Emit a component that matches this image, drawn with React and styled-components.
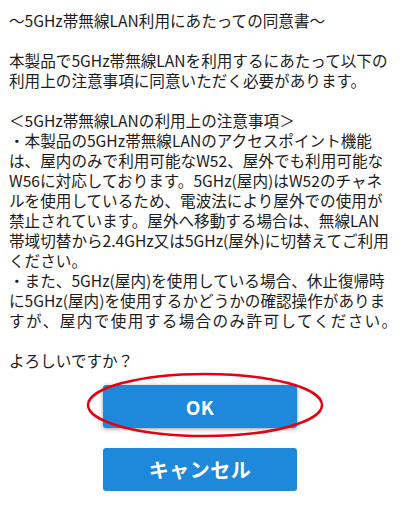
import React from 'react';
import styled, { createGlobalStyle } from 'styled-components';

const GlobalStyle = createGlobalStyle`
    html, body {
        margin: 0;
        padding: 0;
        background: #ffffff;
    }
    body {
        font-family: "Noto Sans CJK JP", "Noto Sans", sans-serif;
    }
`;

const Page = styled.div`
    width: 400px;
    height: 514px;
    box-sizing: border-box;
    padding: 10px 0 0 9px;
    display: flex;
    flex-direction: column;
    overflow: hidden;
`;

const Message = styled.div`
    font-size: 15.6px;
    line-height: 20px;
    color: #1c1c1c;
    white-space: nowrap;
`;

const Line = styled.div`
    height: 20px;
    letter-spacing: ${p => (p.$spread ? '1.4px' : 'normal')};
`;

const Actions = styled.div`
    margin-top: 15px;
    padding-right: 9px;
    display: flex;
    flex-direction: column;
    align-items: center;
    gap: 20px;
`;

const Focus = styled.div`
    position: relative;
`;

const Button = styled.button`
    width: 194px;
    height: 43px;
    border: none;
    border-radius: 3px;
    background: #1e88da;
    color: #ffffff;
    font-family: "Noto Sans CJK JP", "Noto Sans", sans-serif;
    font-weight: 700;
    font-size: ${p => (p.$small ? '19px' : '20px')};
    letter-spacing: 0.5px;
    box-shadow: ${p => (p.$raised ? '0 1px 4px rgba(0, 0, 0, 0.4)' : 'none')};
    display: flex;
    align-items: center;
    justify-content: center;
    padding: 0;
`;

const Circle = styled.svg`
    position: absolute;
    left: -17px;
    top: -13px;
    pointer-events: none;
`;

const lines = [
    '〜5GHz帯無線LAN利用にあたっての同意書〜',
    '',
    '本製品で5GHz帯無線LANを利用するにあたって以下の',
    '利用上の注意事項に同意いただく必要があります。',
    '',
    '＜5GHz帯無線LANの利用上の注意事項＞',
    '・本製品の5GHz帯無線LANのアクセスポイント機能',
    'は、屋内のみで利用可能なW52、屋外でも利用可能な',
    'W56に対応しております。5GHz(屋内)はW52のチャネ',
    'ルを使用しているため、電波法により屋外での使用が',
    '禁止されています。屋外へ移動する場合は、無線LAN',
    '帯域切替から2.4GHz又は5GHz(屋外)に切替えてご利用',
    'ください。',
    '・また、5GHz(屋内)を使用している場合、休止復帰時',
    'に5GHz(屋内)を使用するかどうかの確認操作がありま',
    'すが、屋内で使用する場合のみ許可してください。',
    '',
    'よろしいですか？',
];

const App = () => {
    return (
        <>
            <GlobalStyle />
            <Page>
                <Message>
                    {lines.map((text, i) => (
                        <Line key={i} $spread={i === 15}>{text}</Line>
                    ))}
                </Message>
                <Actions>
                    <Focus>
                        <Button $raised $small>OK</Button>
                        <Circle width="240" height="66" viewBox="0 0 240 66">
                            <ellipse cx="119" cy="33" rx="117" ry="31" fill="none" stroke="#e60012" strokeWidth="2.5" />
                        </Circle>
                    </Focus>
                    <Button>キャンセル</Button>
                </Actions>
            </Page>
        </>
    );
};

export default App;
